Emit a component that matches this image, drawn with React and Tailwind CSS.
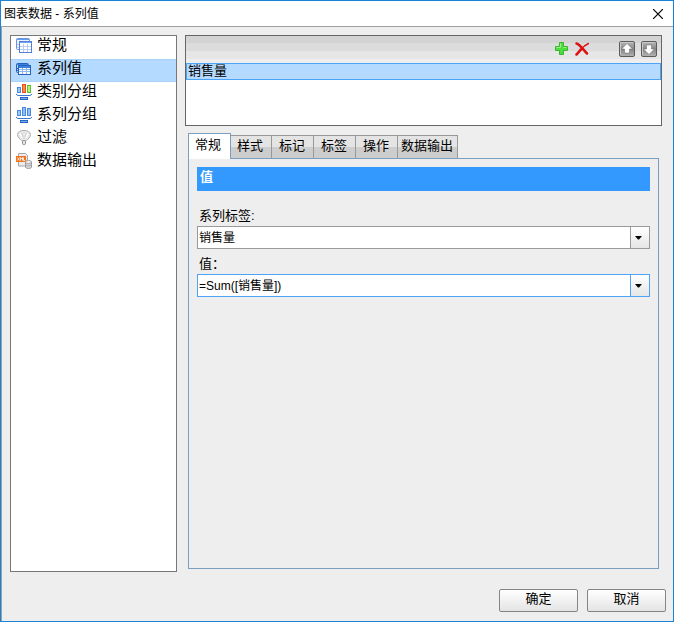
import React, { useState } from 'react';

const GridIcon = () => (
  <svg width="16" height="17" viewBox="0 0 16 17" fill="none">
    <rect x="0.5" y="1.5" width="13" height="11" rx="1" fill="#eaf3ff" stroke="#6f93dc" />
    <path d="M1 2.500h12" stroke="#5f9cf0" />
    <path d="M1 7.500h2M1 10.500h2" stroke="#b9cdf0" />
    <rect x="3.500" y="4.500" width="12" height="11" fill="#fff" stroke="#5580d8" />
    <path d="M4 5.500h11" stroke="#6aa4f2" />
    <path d="M4 9.500h11M4 12.500h11M7.500 7v8M11.500 7v8" stroke="#b9cdf0" />
  </svg>
);

const DarkGridIcon = () => (
  <svg width="16" height="17" viewBox="0 0 16 17" fill="none">
    <rect x="0.5" y="3.500" width="12" height="9" rx="1" fill="#b4d6ff" stroke="#2463bd" />
    <path d="M1 4.500h11" stroke="#3b82dc" />
    <path d="M1 8.500h2M1 10.500h2" stroke="#2463bd" />
    <rect x="2.500" y="5.500" width="12" height="9" fill="#fff" stroke="#2463bd" />
    <path d="M3 7h11" stroke="#3b82dc" strokeWidth="2" />
    <path d="M3 9.500h11M3 11.500h11M6.500 8v6M10.500 8v6" stroke="#8db8ee" />
  </svg>
);

const BarsIcon = ({ fills, strokes }) => (
  <svg width="16" height="18" viewBox="0 0 16 18" fill="none">
    <rect x="1.500" y="4.500" width="3" height="5" fill={fills[0]} stroke={strokes[0]} />
    <rect x="6.500" y="1.500" width="3" height="8" fill={fills[1]} stroke={strokes[1]} />
    <rect x="11.500" y="2.500" width="3" height="7" fill={fills[2]} stroke={strokes[2]} />
    <path d="M0 11.500h1l.5 1h13l.5-1h1" stroke="#3a76cf" />
    <rect x="4.500" y="14.500" width="7" height="2" fill="#76adf2" stroke="#2765c4" />
  </svg>
);

const FilterIcon = () => (
  <svg width="16" height="18" viewBox="0 0 16 18" fill="none">
    <path d="M1.500 5.500c0-5.500 13-5.500 13 0 0 3-2.500 4.500-5 6.500h-3c-2.500-2-5-3.500-5-6.500z" fill="#e6e6e6" stroke="#b0b0b0" />
    <path d="M4 4.500l3 5.500M12 4.500L9 10" stroke="#fff" strokeWidth="2" />
    <path d="M5.500 4l2 6M10.500 4l-2 6" stroke="#c4c4c4" strokeWidth="0.800" />
    <rect x="6.500" y="11.500" width="3" height="4" rx="1" fill="#e4e4e4" stroke="#8b8b8b" />
  </svg>
);

const ExportIcon = () => (
  <svg width="16" height="18" viewBox="0 0 16 18" fill="none">
    <path d="M2.500 1.500h7l2 2v10.500h-9z" fill="#ececec" stroke="#a6a6a6" />
    <rect x="0" y="4" width="10" height="6" fill="#ee7420" />
    <path
      d="M1.500 5.500l2 3M3.500 5.500l-2 3M4.500 8.500v-3l1 1.500 1-1.500v3M7.500 5.500v3h1.500"
      stroke="#fff"
      strokeWidth="0.800"
    />
    <path d="M9.500 10v5c0 2 6 2 6 0v-5z" fill="#d6d6d6" stroke="#9a9a9a" />
    <ellipse cx="12.500" cy="10" rx="3" ry="1.500" fill="#f4f4f4" stroke="#a0a0a0" />
    <path d="M9.500 12.500c0 1.500 6 1.500 6 0" stroke="#a8a8a8" />
  </svg>
);

const AddIcon = () => (
  <svg width="14" height="14" viewBox="0 0 14 14">
    <path d="M5.500 0.500h4v4h4v4h-4v4h-4v-4h-4v-4h4z" fill="#4fdc40" stroke="#35b92e" />
    <path d="M6.500 1.500v4h-4M9.500 5.500h3" fill="none" stroke="#9df08c" />
  </svg>
);

const DeleteIcon = () => (
  <svg width="14" height="14" viewBox="0 0 14 14" fill="none" stroke="#dc1212" strokeLinecap="round">
    <path d="M1.500 1.500C4.500 2 8 7.500 12 11.500" strokeWidth="2.500" />
    <path d="M13.500 1.500C10 3 8 5 6 7.500" strokeWidth="1.500" />
    <path d="M6.500 7C4.500 9 3 11 1.500 12.500" strokeWidth="2.500" />
  </svg>
);

const ArrowIcon = ({ down }) => (
  <svg width="16" height="16" viewBox="0 0 16 16">
    <defs>
      <linearGradient id={down ? 'gd' : 'gu'} x1="0" y1="0" x2="0" y2="1">
        <stop offset="0" stopColor="#b9b9b9" />
        <stop offset="0.5" stopColor="#858585" />
        <stop offset="1" stopColor="#b4b4b4" />
      </linearGradient>
    </defs>
    <rect x="0.5" y="0.5" width="15" height="15" rx="1.500" fill={down ? 'url(#gd)' : 'url(#gu)'} stroke="#5b5b5b" />
    <path d="M1.500 14V1.500H14" fill="none" stroke="#c9c9c9" />
    <path
      d={down ? 'M5.500 4h5v4h3L8 13.500 2.500 8h3z' : 'M8 2.500L13.500 8h-3v4h-5V8h-3z'}
      fill="#fff"
      stroke="#666"
      strokeWidth="0.5"
    />
  </svg>
);

const blues = ['#9cc8fa', '#8dc0fa', '#8dc0fa'];
const blueLines = ['#4a8ae2', '#4a8ae2', '#4a8ae2'];

const navItems = [
  { label: '常规', icon: <GridIcon /> },
  { label: '系列值', icon: <DarkGridIcon /> },
  {
    label: '类别分组',
    icon: <BarsIcon fills={['#9cc8fa', '#ff8a58', '#b4f07a']} strokes={['#4a8ae2', '#e85014', '#5fc230']} />
  },
  { label: '系列分组', icon: <BarsIcon fills={blues} strokes={blueLines} /> },
  { label: '过滤', icon: <FilterIcon /> },
  { label: '数据输出', icon: <ExportIcon /> }
];

const tabs = ['常规', '样式', '标记', '标签', '操作', '数据输出'];

const ComboBox = ({ id, label, initial, active }) => {
  const [value, setValue] = useState(initial);
  const border = active ? 'border-[#4ca3f8]' : 'border-[#9a9a9a]';

  return (
    <div className="flex flex-col">
      <label htmlFor={id} className="pl-[2px] text-[13px] leading-5">
        {label}
      </label>
      <div className={`flex h-[23px] border bg-white ${border}`}>
        <input
          id={id}
          value={value}
          onChange={(e) => setValue(e.target.value)}
          className="min-w-0 flex-1 bg-white pl-px text-[12px] outline-none"
        />
        <button
          aria-label={label}
          className={`flex w-[19px] items-center border-l bg-linear-to-b from-white to-[#e6e6e6] pl-1 ${border}`}
        >
          <svg width="7" height="4" viewBox="0 0 7 4">
            <path d="M0 0h7L4 3.500H3z" fill="#000" />
          </svg>
        </button>
      </div>
    </div>
  );
};

const DialogButton = ({ children }) => (
  <button className="h-[23px] w-[79px] rounded-xs border border-[#858585] bg-linear-to-b from-white to-[#e4e4e4] pb-1 text-[13px] leading-4">
    {children}
  </button>
);

const App = () => {
  const [section, setSection] = useState(1);
  const [tab, setTab] = useState(0);

  return (
    <div className="flex min-h-screen flex-col border border-[#1883d7] bg-[#eee] font-['Liberation_Sans','Noto_Sans_CJK_SC',sans-serif] text-black">
      <header className="flex h-[26px] items-center justify-between border-b border-[#a0a0a0] bg-white pr-[10px] pl-[3px]">
        <h1 className="text-[12px] leading-4">图表数据 - 系列值</h1>
        <button aria-label="关闭">
          <svg width="10" height="10" viewBox="0 0 10 10">
            <path d="M0 0l10 10M10 0L0 10" stroke="#000" strokeWidth="1.200" />
          </svg>
        </button>
      </header>

      <div className="flex flex-1 flex-col border-l border-[#a0a0a0] pt-2 pr-[7px] pb-[9px] pl-2">
        <div className="flex flex-1 gap-2">
          <nav className="mb-[17px] w-[167px] shrink-0 border border-[#777] bg-white">
            {navItems.map((item, i) => (
              <button
                key={item.label}
                onClick={() => setSection(i)}
                className={
                  section === i
                    ? 'flex h-[23px] w-full gap-[5px] border-y border-[#a9d2fb] bg-[#b5daff] pl-[5px] text-left'
                    : 'flex h-[23px] w-full gap-[5px] border-y border-transparent pl-[5px] text-left'
                }
              >
                <span className="w-4 shrink-0">{item.icon}</span>
                <span className="text-[15px] leading-4">{item.label}</span>
              </button>
            ))}
          </nav>

          <main className="mr-1 flex min-w-0 flex-1 flex-col">
            <section className="min-h-[91px] border border-[#666] bg-white">
              <div className="flex h-[27px] items-center justify-end bg-[linear-gradient(#d3d3d3_7px,#dcdcdc_7px,#dcdcdc_15px,#e6e6e6_15px,#e6e6e6_23px,#eee_23px)] pr-1 pb-[2px]">
                <button aria-label="添加" className="mr-[7px]">
                  <AddIcon />
                </button>
                <button aria-label="删除" className="mr-[30px]">
                  <DeleteIcon />
                </button>
                <button aria-label="上移" className="mr-[6px]">
                  <ArrowIcon />
                </button>
                <button aria-label="下移">
                  <ArrowIcon down />
                </button>
              </div>
              <ul>
                <li className="h-[17px] border border-[#4ca3f8] bg-[#b5daff] pl-px text-[13px] leading-[13px]">
                  销售量
                </li>
              </ul>
            </section>

            <div className="mt-[7px] mr-[3px] mb-5 ml-[3px] flex flex-1 flex-col">
              <div role="tablist" className="relative -mb-px flex items-end">
                {tabs.map((name, i) => (
                  <button
                    key={name}
                    role="tab"
                    aria-selected={tab === i}
                    onClick={() => setTab(i)}
                    className={
                      tab === i
                        ? 'relative z-10 -mr-px flex h-[26px] min-w-[43px] border-x border-t border-[#7a9ebf] bg-white px-[6px] pt-[3px] text-[13px] leading-4'
                        : 'flex h-6 min-w-[42px] justify-center border-t border-r border-b border-[#999] border-b-[#7a9ebf] bg-linear-to-b from-[#e4e4e4] from-50% to-[#cdcdcd] to-50% pt-[2px] pr-1 pl-[3px] text-[13px] leading-4'
                    }
                  >
                    {name}
                  </button>
                ))}
              </div>
              <div className="flex flex-1 flex-col border border-[#7a9ebf] p-2">
                <h2 className="h-6 bg-[#3399ff] pl-[3px] text-[13px] leading-5 font-bold text-white">值</h2>
                <div className="mt-[15px] flex flex-col gap-[5px]">
                  <ComboBox id="label" label="系列标签:" initial="销售量" />
                  <ComboBox id="value" label="值：" initial="=Sum([销售量])" active />
                </div>
              </div>
            </div>
          </main>
        </div>

        <footer className="flex justify-end gap-[9px]">
          <DialogButton>确定</DialogButton>
          <DialogButton>取消</DialogButton>
        </footer>
      </div>
    </div>
  );
};

export default App;
